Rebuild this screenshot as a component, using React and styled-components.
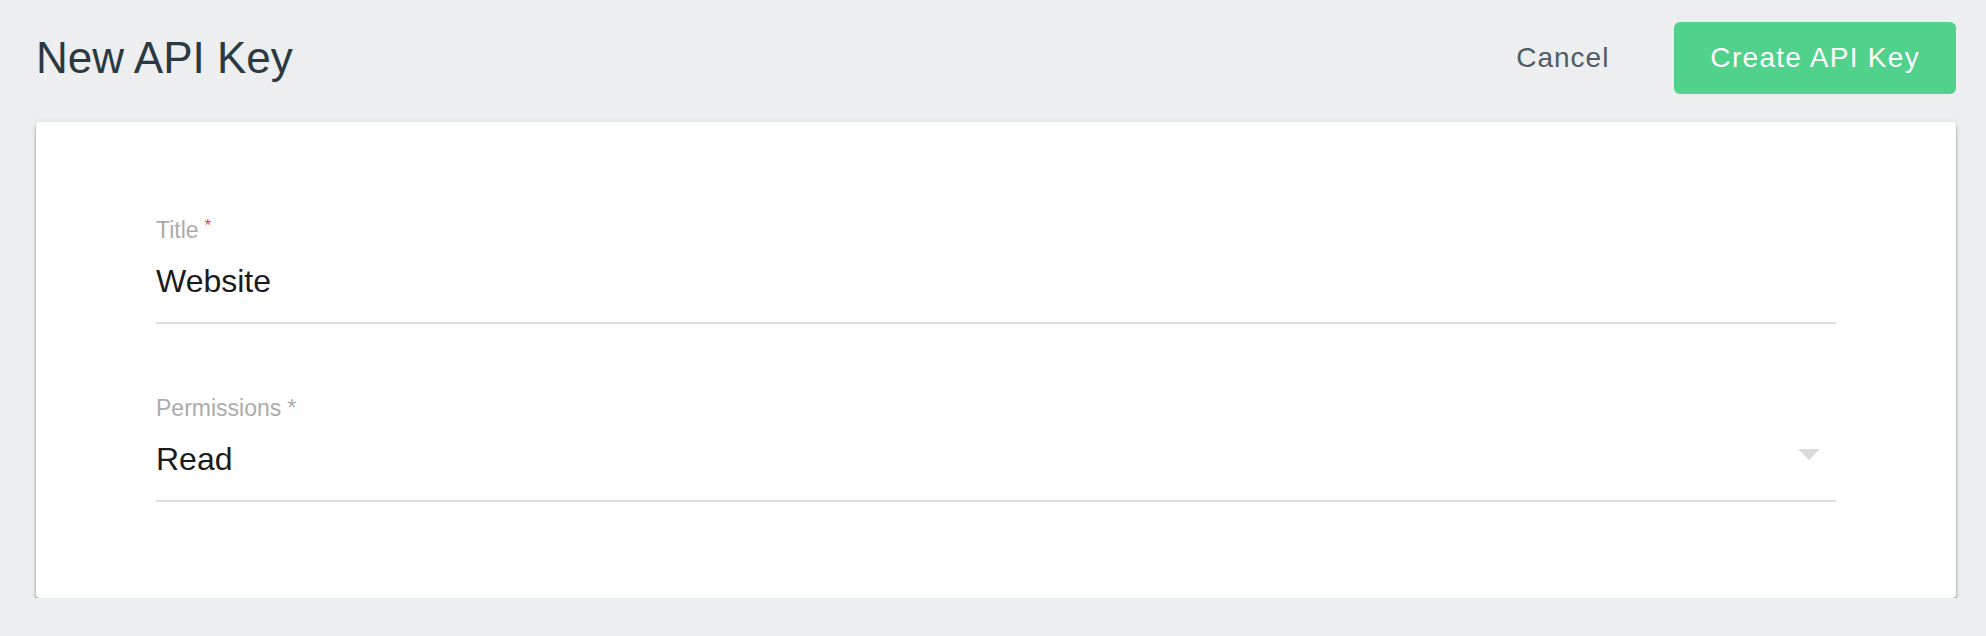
import React from "react";
import styled, { createGlobalStyle } from "styled-components";

const GlobalStyle = createGlobalStyle`
  html, body {
    margin: 0;
    padding: 0;
    background: #edeef0;
    font-family: "Liberation Sans", Arial, sans-serif;
  }
`;

const Page = styled.div`
  padding: 22px 30px 0 36px;
`;

const Header = styled.header`
  display: flex;
  align-items: center;
  height: 72px;
  margin-bottom: 28px;
`;

const Heading = styled.h1`
  flex: 1;
  margin: 0;
  font-size: 44px;
  line-height: 52px;
  font-weight: 400;
  color: #2b3942;
`;

const Actions = styled.div`
  display: flex;
  align-items: center;
  gap: 65px;
`;

const Button = styled.button`
  border: none;
  border-radius: 6px;
  font-family: inherit;
  font-size: 28px;
  line-height: 72px;
  height: 72px;
  letter-spacing: ${(p) => (p.primary ? "1.3px" : "1px")};
  padding: ${(p) => (p.primary ? "0 36px" : "0")};
  background: ${(p) => (p.primary ? "#51d28c" : "transparent")};
  color: ${(p) => (p.primary ? "#ffffff" : "#4d5c67")};
  cursor: pointer;
`;

const Card = styled.section`
  background: #fff;
  border-radius: 4px;
  box-shadow: 0 3px 3px rgba(0, 0, 0, 0.42), 0 0 6px rgba(0, 0, 0, 0.07);
  padding: 94px 120px 96px;
  display: flex;
  flex-direction: column;
  gap: 70px;
`;

const Field = styled.div`
  display: flex;
  flex-direction: column;
`;

const Label = styled.label`
  font-size: 23px;
  line-height: 28px;
  height: 28px;
  color: #ababab;
  margin-bottom: 17px;
`;

const Required = styled.span`
  color: ${(p) => (p.red ? "#e8414d" : "#ababab")};
  font-size: ${(p) => (p.red ? "17px" : "23px")};
  line-height: 0;
  vertical-align: ${(p) => (p.red ? "7px" : "baseline")};
  margin-left: 6px;
`;

const Value = styled.div`
  display: flex;
  justify-content: space-between;
  align-items: flex-start;
  font-size: 32px;
  line-height: 40px;
  height: 40px;
  color: #1b1b1b;
  padding-bottom: 21px;
  border-bottom: 2px solid #dcdcdc;
`;

const Caret = styled.span`
  width: 0;
  height: 0;
  margin-top: 10px;
  margin-right: 16px;
  border-left: 11px solid transparent;
  border-right: 11px solid transparent;
  border-top: 11px solid #dadada;
`;

export default function App() {
  return (
    <Page>
      <GlobalStyle />
      <Header>
        <Heading>New API Key</Heading>
        <Actions>
          <Button>Cancel</Button>
          <Button primary>Create API Key</Button>
        </Actions>
      </Header>
      <Card>
        <Field>
          <Label>
            Title<Required red>*</Required>
          </Label>
          <Value>Website</Value>
        </Field>
        <Field>
          <Label>
            Permissions<Required>*</Required>
          </Label>
          <Value>
            Read
            <Caret />
          </Value>
        </Field>
      </Card>
    </Page>
  );
}
